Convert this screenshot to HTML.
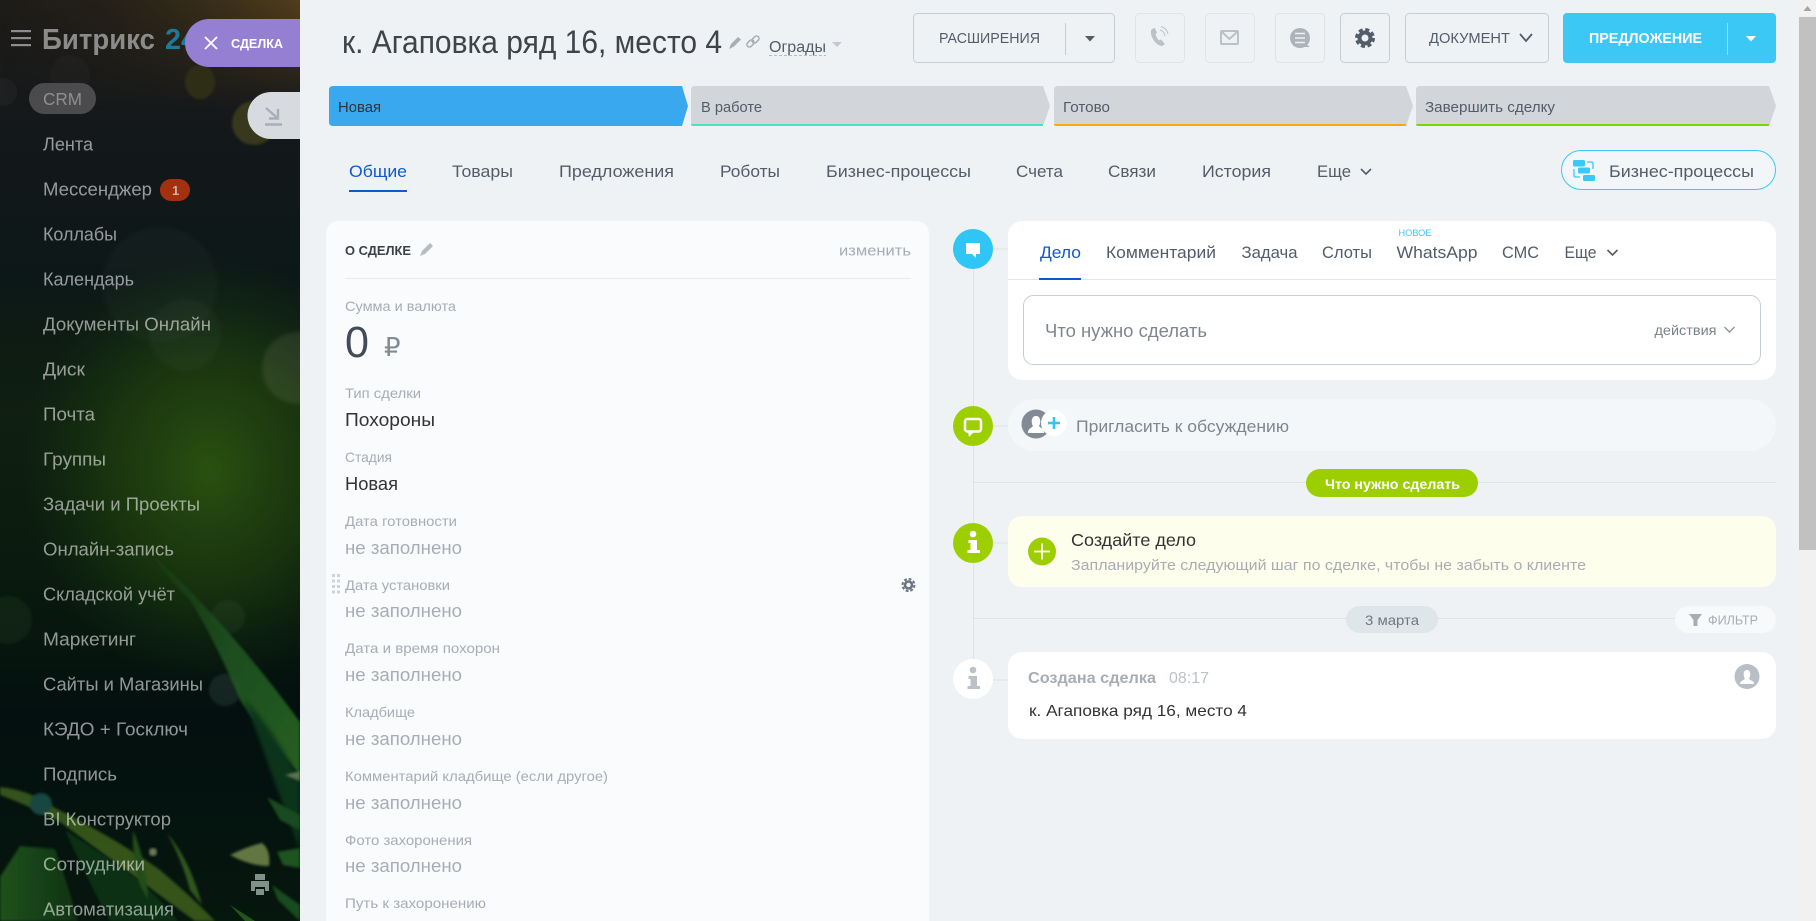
<!DOCTYPE html>
<html lang="ru">
<head>
<meta charset="utf-8">
<title>к. Агаповка ряд 16, место 4</title>
<style>
html,body{margin:0;padding:0;width:1816px;height:921px;overflow:hidden;background:#eef2f4}
svg{display:block}
text{font-family:"Liberation Sans","DejaVu Sans",sans-serif;white-space:pre}
.nav{font-size:18.5px;fill:#fff;fill-opacity:.56}
.tab{font-size:17px;fill:#535c69}
.lab{font-size:14px;fill:#a8adb4}
.val{font-size:18px;fill:#333}
.emp{font-size:18px;fill:#a8adb4}
.st{font-size:14.5px;fill:#535c69}
.tt{font-size:17px;fill:#535c69}
.btn{font-size:14.5px;fill:#535c69}
</style>
</head>
<body>
<svg width="1816" height="921" viewBox="0 0 1816 921" xmlns="http://www.w3.org/2000/svg">
<defs>
<linearGradient id="sb" x1="0" y1="0" x2="0" y2="1">
<stop offset="0" stop-color="#1e1c18"/><stop offset=".06" stop-color="#1a1a1a"/><stop offset=".16" stop-color="#13181a"/><stop offset=".3" stop-color="#0c1817"/><stop offset=".45" stop-color="#0f1f10"/><stop offset=".62" stop-color="#0a1a0e"/><stop offset=".78" stop-color="#03100f"/><stop offset="1" stop-color="#06170e"/>
</linearGradient>
<linearGradient id="tp" x1="0" y1="0" x2="1" y2="0">
<stop offset="0" stop-color="#3a2e17" stop-opacity="0"/><stop offset=".3" stop-color="#3a2e17" stop-opacity=".2"/><stop offset="1" stop-color="#54401c" stop-opacity=".95"/>
</linearGradient>
<linearGradient id="tpv" x1="0" y1="0" x2="0" y2="1">
<stop offset="0" stop-color="#fff"/><stop offset="1" stop-color="#000"/>
</linearGradient>
<mask id="tm"><rect width="300" height="110" fill="url(#tpv)"/></mask>
<radialGradient id="glow"><stop offset="0" stop-color="#2f5a10" stop-opacity=".85"/><stop offset=".55" stop-color="#244a0f" stop-opacity=".5"/><stop offset="1" stop-color="#1a3a10" stop-opacity="0"/></radialGradient>
<linearGradient id="blade" x1="0" y1="0" x2="1" y2="1"><stop offset="0" stop-color="#1d4518" stop-opacity=".3"/><stop offset=".45" stop-color="#1f5420"/><stop offset="1" stop-color="#2d6e26"/></linearGradient>
<linearGradient id="lfade" x1="0" y1="0" x2="1" y2="0"><stop offset="0" stop-color="#245c1e"/><stop offset="1" stop-color="#103816"/></linearGradient>
<filter id="b2"><feGaussianBlur stdDeviation="2"/></filter>
<filter id="b1"><feGaussianBlur stdDeviation="1.200"/></filter>
<clipPath id="sc"><rect width="300" height="921"/></clipPath>
</defs>

<!-- main background -->
<rect width="1816" height="921" fill="#eef2f4"/>

<!-- sidebar -->
<g clip-path="url(#sc)">
<rect width="300" height="921" fill="url(#sb)"/>
<rect width="300" height="110" fill="url(#tp)" mask="url(#tm)"/>
<ellipse cx="210" cy="470" rx="190" ry="215" fill="url(#glow)"/>
<!-- bokeh -->
<ellipse cx="200" cy="82" rx="15" ry="17" fill="#2e2e18" filter="url(#b1)"/>
<circle cx="254" cy="123" r="22" fill="#38381a" filter="url(#b1)"/>
<circle cx="70" cy="75" r="20" fill="#fff" opacity=".02"/>
<circle cx="3" cy="92" r="14" fill="#fff" opacity=".03"/>
<circle cx="160" cy="285" r="58" fill="#fff" opacity=".018" filter="url(#b2)"/>
<circle cx="185" cy="335" r="36" fill="#fff" opacity=".025" filter="url(#b2)"/>
<circle cx="298" cy="368" r="36" fill="#d8d8b0" opacity=".1" filter="url(#b2)"/>
<circle cx="8" cy="620" r="24" fill="#5a8a40" opacity=".1" filter="url(#b1)"/>
<circle cx="228" cy="617" r="17" fill="#5a8a60" opacity=".1" filter="url(#b1)"/>
<circle cx="225" cy="690" r="16" fill="#7a9a90" opacity=".15" filter="url(#b1)"/>
<!-- grass -->
<g opacity=".85">
<path d="M150 552Q225 620 300 722L300 775Q260 730 240 700Q215 640 190 600Q165 575 150 552Z" fill="url(#blade)" filter="url(#b1)"/>
<path d="M245 700Q270 725 300 780V850Q270 770 245 700Z" fill="#0b3a1f" filter="url(#b2)"/>
<path d="M0 787Q30 790 55 808Q115 838 160 870Q195 900 215 921H195Q125 870 60 822Q30 806 0 795Z" fill="#3e5e1c" filter="url(#b1)"/>
<path d="M0 877L20 846L55 849Q68 885 78 921H0Z" fill="url(#lfade)" filter="url(#b1)"/>
<path d="M65 830Q105 855 145 885Q165 905 178 921H110Q85 875 65 830Z" fill="#103618" filter="url(#b1)"/>
<path d="M133 830Q146 860 148 900L140 885Q132 860 133 830Z" fill="#2a561a" filter="url(#b1)"/>
<path d="M167 833Q190 860 202 905L190 890Q182 860 167 833Z" fill="#386224" filter="url(#b1)"/>
<circle cx="41" cy="804" r="11" fill="#1c5048" filter="url(#b1)"/>
<circle cx="153" cy="852" r="4" fill="#7f8a60" filter="url(#b1)"/>
<path d="M230 855Q248 846 262 843Q271 850 269 866Q250 866 230 855Z" fill="#72884a" filter="url(#b1)"/>
<path d="M267 797L300 815V830L280 820Z" fill="#1f5420" filter="url(#b1)"/>
<path d="M277 852L300 848V868L283 865Z" fill="#245f22" filter="url(#b1)"/>
<path d="M230 905L255 921H245Z" fill="#2a5f20"/>
<path d="M285 775L300 771V781Z" fill="#6c8458" filter="url(#b1)"/>
<path d="M272 885L300 905V921L278 900Z" fill="#1f5420" filter="url(#b1)"/>
</g>
<!-- printer -->
<path d="M255 874H265V880H255ZM251 881H269V891H265V887H255V891H251ZM256 889H264V895H256Z" fill="#7f918a"/>
<!-- logo -->
<rect x="11" y="30" width="20" height="2.200" fill="#8d8d8d"/><rect x="11" y="37" width="20" height="2.200" fill="#8d8d8d"/><rect x="11" y="44" width="20" height="2.200" fill="#8d8d8d"/>
<text x="42" y="49" font-size="29" font-weight="700" fill="#8b8b8b" textLength="113" lengthAdjust="spacingAndGlyphs">Битрикс</text>
<text x="165" y="49" font-size="29" font-weight="700" fill="#1d7a9a" textLength="32" lengthAdjust="spacingAndGlyphs">24</text>
<!-- crm -->
<rect x="29" y="83" width="67" height="31" rx="15.500" fill="#4b4b4e"/>
<text x="43" y="105" font-size="17.500" fill="#8f8f91" textLength="39" lengthAdjust="spacingAndGlyphs">CRM</text>
<!-- nav -->
<text class="nav" x="43" y="150.700" textLength="50" lengthAdjust="spacingAndGlyphs">Лента</text>
<text class="nav" x="43" y="195.700" textLength="109" lengthAdjust="spacingAndGlyphs">Мессенджер</text>
<rect x="160" y="179" width="30" height="22" rx="11" fill="#a3300f"/>
<text x="172" y="195" font-size="13" font-weight="700" fill="#c9b3a6">1</text>
<text class="nav" x="43" y="240.700" textLength="74" lengthAdjust="spacingAndGlyphs">Коллабы</text>
<text class="nav" x="43" y="285.700" textLength="91" lengthAdjust="spacingAndGlyphs">Календарь</text>
<text class="nav" x="43" y="330.700" textLength="168" lengthAdjust="spacingAndGlyphs">Документы Онлайн</text>
<text class="nav" x="43" y="375.700" textLength="42" lengthAdjust="spacingAndGlyphs">Диск</text>
<text class="nav" x="43" y="420.700" textLength="52" lengthAdjust="spacingAndGlyphs">Почта</text>
<text class="nav" x="43" y="465.700" textLength="63" lengthAdjust="spacingAndGlyphs">Группы</text>
<text class="nav" x="43" y="510.700" textLength="157" lengthAdjust="spacingAndGlyphs">Задачи и Проекты</text>
<text class="nav" x="43" y="555.700" textLength="131" lengthAdjust="spacingAndGlyphs">Онлайн-запись</text>
<text class="nav" x="43" y="600.700" textLength="132" lengthAdjust="spacingAndGlyphs">Складской учёт</text>
<text class="nav" x="43" y="645.700" textLength="93" lengthAdjust="spacingAndGlyphs">Маркетинг</text>
<text class="nav" x="43" y="690.700" textLength="160" lengthAdjust="spacingAndGlyphs">Сайты и Магазины</text>
<text class="nav" x="43" y="735.700" textLength="145" lengthAdjust="spacingAndGlyphs">КЭДО + Госключ</text>
<text class="nav" x="43" y="780.700" textLength="74" lengthAdjust="spacingAndGlyphs">Подпись</text>
<text class="nav" x="43" y="825.700" textLength="128" lengthAdjust="spacingAndGlyphs">BI Конструктор</text>
<text class="nav" x="43" y="870.700" textLength="102" lengthAdjust="spacingAndGlyphs">Сотрудники</text>
<text class="nav" x="43" y="915.700" textLength="131" lengthAdjust="spacingAndGlyphs">Автоматизация</text>
<!-- slider pills -->
<path d="M300 19H209A24 24 0 0 0 209 67H300Z" fill="#957fd3"/>
<path d="M205 37L217 49M217 37L205 49" stroke="#fff" stroke-width="1.800" fill="none"/>
<text x="231" y="48" font-size="13" font-weight="700" fill="#fff" textLength="52" lengthAdjust="spacingAndGlyphs">СДЕЛКА</text>
<path d="M300 92H271A23.500 23.500 0 0 0 271 139H300Z" fill="#d7dade"/>
<path d="M266 108L278 118.500M278 109V118.500H269M265 124.500H282" stroke="#a9adb6" stroke-width="2.400" fill="none"/>
</g>

<!-- title -->
<text x="342" y="53" font-size="32" fill="#3f444b" textLength="380" lengthAdjust="spacingAndGlyphs">к. Агаповка ряд 16, место 4</text>
<path d="M729 49L731 44L738 37L741 39.500L734 46.500Z" fill="#a8adb4"/>
<g fill="none" stroke="#a8adb4" stroke-width="1.500"><rect x="746.500" y="41" width="8" height="5" rx="2.500" transform="rotate(-45 750.500 43.500)"/><rect x="751.500" y="37" width="8" height="5" rx="2.500" transform="rotate(-45 755.500 39.500)"/></g>
<text x="769" y="52" font-size="15.500" fill="#535c69" textLength="57" lengthAdjust="spacingAndGlyphs">Ограды</text>
<path d="M769 55.500H826" stroke="#b8bcc2" stroke-dasharray="3 2" fill="none"/>
<path d="M832 42H842L837 47Z" fill="#c5c9cf"/>

<!-- top buttons -->
<rect x="913.500" y="13.500" width="201" height="49" rx="4" fill="none" stroke="#c6cdd3"/>
<text class="btn" x="939" y="43" textLength="101" lengthAdjust="spacingAndGlyphs">РАСШИРЕНИЯ</text>
<path d="M1065.500 23V55" stroke="#c6cdd3"/>
<path d="M1085 36H1095L1090 41.500Z" fill="#535c69"/>
<g fill="none" stroke="#e0e4e8"><rect x="1135.500" y="13.500" width="49" height="49" rx="4"/><rect x="1205.500" y="13.500" width="49" height="49" rx="4"/><rect x="1275.500" y="13.500" width="49" height="49" rx="4"/></g>
<rect x="1340.500" y="13.500" width="49" height="49" rx="4" fill="none" stroke="#c6cdd3"/>
<!-- phone -->
<path d="M1152 29C1150 31 1151 36 1153 39C1155 43 1159 46 1162 46L1165 44L1161 39.500L1159 40.500C1157.500 39 1156 36.500 1155.500 34L1157 33L1155 28Z" fill="#bcc1c7"/>
<path d="M1160 30A7 7 0 0 1 1165 36M1161 26.500A10 10 0 0 1 1168 34" stroke="#bcc1c7" fill="none"/>
<!-- mail -->
<rect x="1221" y="31" width="17" height="13" rx="1" fill="none" stroke="#bcc1c7" stroke-width="2"/>
<path d="M1222 32L1229.500 39L1237 32" fill="none" stroke="#bcc1c7" stroke-width="2"/>
<!-- chat -->
<circle cx="1300" cy="38" r="10" fill="#aeb3ba"/>
<path d="M1306 44L1310 47L1304 47Z" fill="#aeb3ba"/>
<path d="M1295 33.500H1305M1295 38H1305M1295 42.500H1305" stroke="#eef2f4" stroke-width="1.500"/>
<!-- gear -->
<g fill="none" stroke="#535c69"><circle cx="1365" cy="38" r="5.500" stroke-width="4"/><circle cx="1365" cy="38" r="8.500" stroke-width="3" stroke-dasharray="4 2.680"/></g>
<rect x="1405.500" y="13.500" width="143" height="49" rx="4" fill="none" stroke="#c6cdd3"/>
<text class="btn" x="1429" y="43" textLength="81" lengthAdjust="spacingAndGlyphs">ДОКУМЕНТ</text>
<path d="M1520 34L1526 41L1532 34" fill="none" stroke="#535c69" stroke-width="1.800"/>
<rect x="1563" y="13" width="213" height="50" rx="4" fill="#3bc8f5"/>
<text x="1589" y="43" font-size="14.500" font-weight="700" fill="#fff" textLength="113" lengthAdjust="spacingAndGlyphs">ПРЕДЛОЖЕНИЕ</text>
<path d="M1727.500 23V55" stroke="#8fdff9"/>
<path d="M1746 36H1756L1751 41.500Z" fill="#fff"/>

<!-- stages -->
<path d="M333 86H682L688 106L682 126H333Q329 126 329 122V90Q329 86 333 86Z" fill="#39a8ef"/>
<text x="338" y="112" font-size="14.500" fill="#333" textLength="43" lengthAdjust="spacingAndGlyphs">Новая</text>
<path d="M695 86H1043L1050 106L1043 126H695Q691 126 691 122V90Q691 86 695 86Z" fill="#d2d5d9"/>
<path d="M691 124H1043V126H693Q691 126 691 124Z" fill="#47e4c2"/>
<text class="st" x="701" y="112" textLength="61" lengthAdjust="spacingAndGlyphs">В работе</text>
<path d="M1058 86H1406L1413 106L1406 126H1058Q1054 126 1054 122V90Q1054 86 1058 86Z" fill="#d2d5d9"/>
<path d="M1054 124H1406V126H1056Q1054 126 1054 124Z" fill="#ffa900"/>
<text class="st" x="1063" y="112" textLength="47" lengthAdjust="spacingAndGlyphs">Готово</text>
<path d="M1420 86H1769L1776 106L1769 126H1420Q1416 126 1416 122V90Q1416 86 1420 86Z" fill="#d2d5d9"/>
<path d="M1416 124H1769V126H1418Q1416 126 1416 124Z" fill="#7bd500"/>
<text class="st" x="1425" y="112" textLength="130" lengthAdjust="spacingAndGlyphs">Завершить сделку</text>

<!-- tabs -->
<text class="tt" x="349" y="177" style="fill:#1058d0" textLength="58" lengthAdjust="spacingAndGlyphs">Общие</text>
<rect x="349" y="190" width="58" height="2" fill="#1058d0"/>
<text class="tt" x="452" y="177" textLength="61" lengthAdjust="spacingAndGlyphs">Товары</text>
<text class="tt" x="559" y="177" textLength="115" lengthAdjust="spacingAndGlyphs">Предложения</text>
<text class="tt" x="720" y="177" textLength="60" lengthAdjust="spacingAndGlyphs">Роботы</text>
<text class="tt" x="826" y="177" textLength="145" lengthAdjust="spacingAndGlyphs">Бизнес-процессы</text>
<text class="tt" x="1016" y="177" textLength="47" lengthAdjust="spacingAndGlyphs">Счета</text>
<text class="tt" x="1108" y="177" textLength="48" lengthAdjust="spacingAndGlyphs">Связи</text>
<text class="tt" x="1202" y="177" textLength="69" lengthAdjust="spacingAndGlyphs">История</text>
<text class="tt" x="1317" y="177" textLength="34" lengthAdjust="spacingAndGlyphs">Еще</text>
<path d="M1361 169L1366 174L1371 169" fill="none" stroke="#535c69" stroke-width="1.600"/>
<rect x="1561.500" y="150.500" width="214" height="39" rx="19.500" fill="#f2f6f9" stroke="#3bc8f5"/>
<g fill="#3bc8f5"><rect x="1573" y="160" width="12" height="6.500" rx="1.500"/><rect x="1578" y="167.500" width="12" height="6" rx="1.500"/><rect x="1583" y="175" width="12" height="6" rx="1.500"/></g>
<path d="M1587 162H1591.500Q1593 162 1593 164V169M1574 169V175.500Q1574 177 1576 177H1580" fill="none" stroke="#3bc8f5" stroke-width="1.300"/>
<text class="tt" x="1609" y="177" textLength="145" lengthAdjust="spacingAndGlyphs">Бизнес-процессы</text>

<!-- left card -->
<path d="M340 221H915Q929 221 929 235V921H326V235Q326 221 340 221Z" fill="#f9fbfd"/>
<text x="345" y="255" font-size="13" font-weight="700" fill="#3d4147" textLength="66" lengthAdjust="spacingAndGlyphs">О СДЕЛКЕ</text>
<path d="M420 256L422 251L430 243L433 246L425 254Z" fill="#b8bcc2"/>
<text x="839" y="255.500" font-size="15" fill="#a8adb4" textLength="72" lengthAdjust="spacingAndGlyphs">изменить</text>
<rect x="345" y="278" width="566" height="1" fill="#e8ebee"/>
<text class="lab" x="345" y="311" textLength="111" lengthAdjust="spacingAndGlyphs">Сумма и валюта</text>
<text x="345" y="357" font-size="44" fill="#434b56" textLength="24" lengthAdjust="spacingAndGlyphs">0</text>
<text x="384" y="356" font-size="26" fill="#828b95" font-family="DejaVu Sans">₽</text>
<text class="lab" x="345" y="398" textLength="76" lengthAdjust="spacingAndGlyphs">Тип сделки</text>
<text class="val" x="345" y="426" textLength="90" lengthAdjust="spacingAndGlyphs">Похороны</text>
<text class="lab" x="345" y="462" textLength="47" lengthAdjust="spacingAndGlyphs">Стадия</text>
<text class="val" x="345" y="490" textLength="53" lengthAdjust="spacingAndGlyphs">Новая</text>
<text class="lab" x="345" y="526" textLength="112" lengthAdjust="spacingAndGlyphs">Дата готовности</text>
<text class="emp" x="345" y="554" textLength="117" lengthAdjust="spacingAndGlyphs">не заполнено</text>
<g fill="#d0d4d9"><rect x="332" y="574" width="3" height="3"/><rect x="337" y="574" width="3" height="3"/><rect x="332" y="579.500" width="3" height="3"/><rect x="337" y="579.500" width="3" height="3"/><rect x="332" y="585" width="3" height="3"/><rect x="337" y="585" width="3" height="3"/><rect x="332" y="590.500" width="3" height="3"/><rect x="337" y="590.500" width="3" height="3"/></g>
<text class="lab" x="345" y="590" textLength="105" lengthAdjust="spacingAndGlyphs">Дата установки</text>
<g fill="none" stroke="#6a737f"><circle cx="908.500" cy="585" r="3.500" stroke-width="2.600"/><circle cx="908.500" cy="585" r="6" stroke-width="2" stroke-dasharray="2.800 1.910"/></g>
<text class="emp" x="345" y="617" textLength="117" lengthAdjust="spacingAndGlyphs">не заполнено</text>
<text class="lab" x="345" y="653" textLength="155" lengthAdjust="spacingAndGlyphs">Дата и время похорон</text>
<text class="emp" x="345" y="681" textLength="117" lengthAdjust="spacingAndGlyphs">не заполнено</text>
<text class="lab" x="345" y="717" textLength="70" lengthAdjust="spacingAndGlyphs">Кладбище</text>
<text class="emp" x="345" y="745" textLength="117" lengthAdjust="spacingAndGlyphs">не заполнено</text>
<text class="lab" x="345" y="781" textLength="263" lengthAdjust="spacingAndGlyphs">Комментарий кладбище (если другое)</text>
<text class="emp" x="345" y="809" textLength="117" lengthAdjust="spacingAndGlyphs">не заполнено</text>
<text class="lab" x="345" y="845" textLength="127" lengthAdjust="spacingAndGlyphs">Фото захоронения</text>
<text class="emp" x="345" y="872" textLength="117" lengthAdjust="spacingAndGlyphs">не заполнено</text>
<text class="lab" x="345" y="908" textLength="141" lengthAdjust="spacingAndGlyphs">Путь к захоронению</text>

<!-- timeline -->
<path d="M973.500 249V660" stroke="#dfe3e6" fill="none"/>
<path d="M993 249H1008M993 426H1008M993 543H1008M993 680H1008" stroke="#dfe3e6" fill="none"/>
<path d="M973 482.500H1776M973 618.500H1776" stroke="#dfe3e6" fill="none"/>

<!-- composer card -->
<circle cx="973" cy="249" r="20" fill="#2fc6f6"/>
<path d="M966 243H980V254H976V258L972 254H966Z" fill="#fff"/>
<rect x="1008" y="221" width="768" height="159" rx="14" fill="#fff"/>
<text class="tab" x="1040" y="258" style="fill:#1058d0" textLength="41" lengthAdjust="spacingAndGlyphs">Дело</text>
<text class="tab" x="1106" y="258" textLength="110" lengthAdjust="spacingAndGlyphs">Комментарий</text>
<text class="tab" x="1241.500" y="258" textLength="56" lengthAdjust="spacingAndGlyphs">Задача</text>
<text class="tab" x="1322" y="258" textLength="50" lengthAdjust="spacingAndGlyphs">Слоты</text>
<text class="tab" x="1396.500" y="258" textLength="81" lengthAdjust="spacingAndGlyphs">WhatsApp</text>
<text class="tab" x="1502" y="258" textLength="37" lengthAdjust="spacingAndGlyphs">СМС</text>
<text class="tab" x="1564.500" y="258" textLength="32" lengthAdjust="spacingAndGlyphs">Еще</text>
<path d="M1607.500 250L1612.500 255L1617.500 250" fill="none" stroke="#535c69" stroke-width="1.600"/>
<text x="1398.500" y="236" font-size="9.500" fill="#3bc8f5" textLength="33" lengthAdjust="spacingAndGlyphs">НОВОЕ</text>
<rect x="1008" y="279" width="768" height="1" fill="#e3e5e7"/>
<rect x="1039" y="278" width="42" height="2" fill="#1058d0"/>
<rect x="1023.500" y="295.500" width="737" height="69" rx="10" fill="#fff" stroke="#c6cdd3"/>
<text x="1045" y="337" font-size="18" fill="#80868e" textLength="162" lengthAdjust="spacingAndGlyphs">Что нужно сделать</text>
<text x="1654.500" y="335" font-size="14" fill="#7b8189" textLength="62" lengthAdjust="spacingAndGlyphs">действия</text>
<path d="M1724.500 327L1729.500 332L1734.500 327" fill="none" stroke="#8e949b" stroke-width="1.400"/>

<!-- invite -->
<circle cx="973" cy="426" r="20" fill="#9dcf00"/>
<rect x="965" y="419" width="16" height="12.500" rx="2.500" fill="none" stroke="#fff" stroke-width="2.500"/>
<path d="M968 432L969 437L974 432Z" fill="#fff"/>
<rect x="1008" y="399" width="768" height="52" rx="26" fill="#f4f7f9"/>
<circle cx="1036" cy="424" r="14.500" fill="#828b95"/>
<path d="M1028 433C1028 428 1032 428 1033 426C1031 423 1031 416 1036 416C1041 416 1041 423 1039 426C1040 428 1044 428 1044 433Z" fill="#fff"/>
<circle cx="1054" cy="423" r="13" fill="#fff"/>
<path d="M1054 417V429M1048 423H1060" stroke="#2fc6f6" stroke-width="2.600"/>
<text x="1076" y="432" font-size="16.500" fill="#80868e" textLength="213" lengthAdjust="spacingAndGlyphs">Пригласить к обсуждению</text>
<rect x="1306" y="469" width="172" height="28" rx="14" fill="#9dcf00"/>
<text x="1325" y="489" font-size="14" font-weight="700" fill="#fff" textLength="135" lengthAdjust="spacingAndGlyphs">Что нужно сделать</text>

<!-- yellow card -->
<circle cx="973" cy="543" r="20" fill="#9dcf00"/>
<circle cx="973" cy="534" r="3.300" fill="#fff"/>
<path d="M968.500 540H977V550H980V553H967.500V550H970.500V543H968.500Z" fill="#fff"/>
<rect x="1008" y="516" width="768" height="71" rx="14" fill="#fefeed"/>
<circle cx="1042" cy="551.500" r="14" fill="#9dcf00"/>
<path d="M1042 543.500V559.500M1034 551.500H1050" stroke="#fff" stroke-width="1.800"/>
<text x="1071" y="546" font-size="17.500" fill="#333" textLength="125" lengthAdjust="spacingAndGlyphs">Создайте дело</text>
<text x="1071" y="570" font-size="15" fill="#a8adb4" textLength="515" lengthAdjust="spacingAndGlyphs">Запланируйте следующий шаг по сделке, чтобы не забыть о клиенте</text>

<!-- date row -->
<rect x="1346" y="606" width="92" height="27" rx="13.500" fill="#dfe6ea"/>
<text x="1365" y="625" font-size="14" fill="#6f7880" textLength="54" lengthAdjust="spacingAndGlyphs">3 марта</text>
<rect x="1675" y="606" width="101" height="27" rx="13.500" fill="#f7f9fb"/>
<path d="M1689 614H1702L1697.500 620V626L1693.500 626V620Z" fill="#a8adb4"/>
<text x="1708" y="624.500" font-size="12.500" fill="#a8adb4" textLength="50" lengthAdjust="spacingAndGlyphs">ФИЛЬТР</text>

<!-- created card -->
<circle cx="973" cy="679" r="20" fill="#fff"/>
<circle cx="973" cy="670" r="3.300" fill="#bcc1c7"/>
<path d="M968.500 676H977V686H980V689H967.500V686H970.500V679H968.500Z" fill="#bcc1c7"/>
<rect x="1008" y="652" width="768" height="87" rx="14" fill="#fff"/>
<text x="1028" y="683" font-size="15.500" font-weight="700" fill="#a8adb4" textLength="128" lengthAdjust="spacingAndGlyphs">Создана сделка</text>
<text x="1169" y="683" font-size="15.500" fill="#bcc1c7" textLength="40" lengthAdjust="spacingAndGlyphs">08:17</text>
<text x="1029" y="716" font-size="16" fill="#333" textLength="218" lengthAdjust="spacingAndGlyphs">к. Агаповка ряд 16, место 4</text>
<circle cx="1747" cy="676.500" r="12.500" fill="#b9bfc7"/>
<path d="M1740 684C1740 680 1744 681 1745 678.500C1743 676 1743 670 1747 670C1751 670 1751 676 1749 678.500C1750 681 1754 680 1754 684Z" fill="#fff"/>

<!-- scrollbar -->
<rect x="1799" y="0" width="17" height="921" fill="#f1f1f1"/>
<rect x="1799" y="17" width="17" height="533" fill="#c1c1c1"/>
<path d="M1803.500 11L1807.500 6L1811.500 11Z" fill="#a3a3a3"/>
</svg>
</body>
</html>
